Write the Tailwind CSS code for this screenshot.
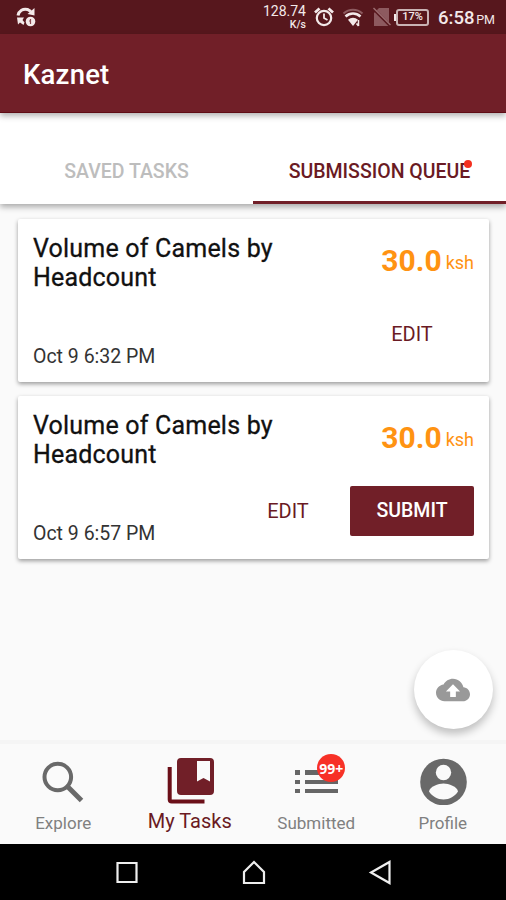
<!DOCTYPE html>
<html lang="en">
<head>
    <meta charset="UTF-8">
    <meta name="viewport" content="width=device-width, initial-scale=1.0">
    <title>Kaznet</title>
    <script src="https://cdn.jsdelivr.net/npm/@tailwindcss/browser@4"></script>
</head>
<body class="bg-[#fafafa]">
<div class="flex h-[900px] w-[506px] flex-col overflow-hidden bg-[#fafafa] font-[Roboto,sans-serif] whitespace-nowrap">

    <!-- Status bar -->
    <div class="flex h-[34px] shrink-0 items-center bg-[#57171d] pl-[15px] text-[#f3e9e9]">
        <svg class="h-[22px] w-[22px]" viewBox="0 0 22 22" fill="none">
            <path d="M3 9.500C4 4.500 8 2.500 12.500 3.500L16 5.500" stroke="#f3e9e9" stroke-width="3"/>
            <path d="M19.500 2V9.500L12.500 8Z" fill="#f3e9e9"/>
            <path d="M2 11.500H9L7.500 14L9.500 16.500L8.500 19L5 16.500L3 18.500Z" fill="#f3e9e9"/>
            <circle cx="15.500" cy="15.500" r="4.800" fill="#f3e9e9"/>
            <path d="M15.500 13V18M14 15H15.500" stroke="#8a4a50" stroke-width="1.200"/>
        </svg>
        <div class="ml-auto flex w-[44px] flex-col items-end">
            <span class="text-[14px] leading-[15px]">128.74</span>
            <span class="text-[10.5px] leading-[11px] font-medium">K/s</span>
        </div>
        <svg class="ml-[7px] h-[22px] w-[22px]" viewBox="0 0 22 22" fill="none" stroke="#f3e9e9">
            <circle cx="11" cy="12" r="7.200" stroke-width="2.200"/>
            <path d="M11 7.500V12L14.500 14" stroke-width="1.800"/>
            <path d="M2 6.500L6.500 2.500M20 6.500L15.500 2.500" stroke-width="2.800"/>
        </svg>
        <svg class="ml-[7px] h-[20px] w-[22px]" viewBox="0 0 22 20" fill="none">
            <path d="M1.500 6.500C7 1.500 15 1.500 20.500 6.500" stroke="#8d5a5f" stroke-width="2"/>
            <path d="M3.500 9.500C8 5.500 14 5.500 18.500 9.500" stroke="#f3e9e9" stroke-width="2.600"/>
            <path d="M6 12.700C9 10 13 10 16 12.700L11 19Z" fill="#f3e9e9"/>
            <path d="M16.500 13V19M14.500 16.500L16.500 19" stroke="#f3e9e9" stroke-width="1.500"/>
        </svg>
        <svg class="ml-[9px] h-[20px] w-[18px]" viewBox="0 0 18 20">
            <path d="M6 1H16V19H1V6Z" fill="#8d5a5f"/>
            <path d="M0 1.500L17.500 19" stroke="#57171d" stroke-width="3"/>
            <path d="M.5 1L17.500 18" stroke="#9c6e72" stroke-width="1.400"/>
        </svg>
        <div class="ml-[3px] flex items-center">
            <div class="h-[7px] w-[2px] bg-[#f3e9e9]"></div>
            <div class="flex h-[17px] w-[33px] items-center justify-center rounded-[3px] border-2 border-[#c9b3b4] text-[11px] font-medium">17%</div>
        </div>
        <div class="mt-[3px] mr-[11px] ml-[9px] flex w-[57px] items-baseline justify-between">
            <span class="text-[18.5px] leading-[20px] font-medium">6:58</span>
            <span class="text-[12.5px]">PM</span>
        </div>
    </div>

    <!-- App bar -->
    <header class="relative z-20 flex h-[79px] shrink-0 items-center border-b border-[#5f0c15] bg-[#711f28] pt-[4px] pl-[23px] shadow-[0_3px_6px_rgba(0,0,0,0.3)]">
        <h1 class="text-[27.5px] leading-none font-medium tracking-[0.2px] text-white">Kaznet</h1>
    </header>

    <!-- Tabs -->
    <nav class="relative z-10 flex h-[91px] shrink-0 bg-white text-[19.5px] shadow-[0_3px_6px_rgba(0,0,0,0.32)]">
        <div class="flex w-[253px] items-end justify-center pb-[20px] leading-[24px] font-medium text-[#bdbdbd]">SAVED TASKS</div>
        <div class="flex flex-1 items-end justify-center border-b-[3px] border-[#711f28] pb-[17px] leading-[24px] font-medium text-[#6a1a23]">
            <span class="relative">SUBMISSION QUEUE<i class="absolute top-0 -right-[2px] h-[8px] w-[8px] rounded-full bg-[#f4301f]"></i></span>
        </div>
    </nav>

    <!-- Task list -->
    <main class="flex flex-1 flex-col gap-[14px] pt-[15px] pr-[17px] pl-[18px]">
        <article class="flex h-[163px] justify-between rounded-[2px] bg-white pr-[15px] pl-[15px] shadow-[0_2px_4px_rgba(0,0,0,0.38)]">
            <div class="flex flex-col justify-between pt-[15px] pb-[13px]">
                <h2 class="text-[25px] leading-[29px] tracking-[0.2px] text-[#111] [-webkit-text-stroke:0.3px_#111]">Volume of Camels by<br>Headcount</h2>
                <time class="text-[19.5px] leading-[24px] text-[#333]">Oct 9 6:32 PM</time>
            </div>
            <div class="flex flex-col items-end justify-between pt-[24px] pb-[23px] text-[#ff9312]">
                <div class="flex items-baseline gap-[4px] leading-[36px]">
                    <span class="text-[30px] font-bold">30.0</span>
                    <span class="relative -top-[2px] text-[18px]">ksh</span>
                </div>
                <button class="h-[50px] w-[124px] text-[20px] text-[#6a1a23]">EDIT</button>
            </div>
        </article>
        <article class="flex h-[163px] justify-between rounded-[2px] bg-white pr-[15px] pl-[15px] shadow-[0_2px_4px_rgba(0,0,0,0.38)]">
            <div class="flex flex-col justify-between pt-[15px] pb-[13px]">
                <h2 class="text-[25px] leading-[29px] tracking-[0.2px] text-[#111] [-webkit-text-stroke:0.3px_#111]">Volume of Camels by<br>Headcount</h2>
                <time class="text-[19.5px] leading-[24px] text-[#333]">Oct 9 6:57 PM</time>
            </div>
            <div class="flex flex-col items-end justify-between pt-[24px] pb-[23px] text-[#ff9312]">
                <div class="flex items-baseline gap-[4px] leading-[36px]">
                    <span class="text-[30px] font-bold">30.0</span>
                    <span class="relative -top-[2px] text-[18px]">ksh</span>
                </div>
                <div class="-ml-[124px] flex">
                    <button class="h-[50px] w-[124px] text-[20px] text-[#6a1a23]">EDIT</button>
                    <button class="h-[50px] w-[124px] rounded-[2px] bg-[#711f28] text-[19.5px] font-medium text-white">SUBMIT</button>
                </div>
            </div>
        </article>
    </main>

    <!-- Upload button -->
    <button class="absolute top-[650px] left-[414px] z-10 flex h-[79px] w-[79px] items-center justify-center rounded-full bg-white shadow-[0_5px_9px_rgba(0,0,0,0.24)]">
        <svg class="-ml-[1px] h-[34px] w-[34px]" viewBox="0 0 24 24" fill="#999">
            <path d="M19.350 10.040C18.670 6.590 15.640 4 12 4 9.110 4 6.600 5.640 5.350 8.040 2.340 8.360 0 10.910 0 14c0 3.310 2.690 6 6 6h13c2.760 0 5-2.240 5-5 0-2.640-2.050-4.780-4.650-4.960zM14 13v4h-4v-4H7l5-5 5 5h-3z"/>
        </svg>
    </button>

    <!-- Bottom navigation -->
    <nav class="relative z-20 grid h-[104px] shrink-0 grid-cols-4 border-t-4 border-[#f5f5f5] bg-[#fafafa] text-[17px] text-[#808080]">
        <div class="flex flex-col items-center pt-[13px]">
            <svg class="h-[48px] w-[48px]" viewBox="0 0 48 48" fill="none" stroke="#696969">
                <circle cx="18.800" cy="20" r="13.300" stroke-width="4"/>
                <path d="M28.500 29.500L42.500 43.500" stroke-width="5"/>
            </svg>
            <span class="mt-[8px] leading-[20px]">Explore</span>
        </div>
        <div class="flex flex-col items-center pt-[13px] text-[#6a1a23]">
            <svg class="h-[48px] w-[48px]" viewBox="0 0 48 48">
                <path d="M3.700 10V42.500Q3.700 44.500 5.700 44.500H38.500" fill="none" stroke="#6b0f18" stroke-width="4"/>
                <path fill="#711f28" fill-rule="evenodd" d="M15 1H44Q48 1 48 5V34Q48 38 44 38H15Q11 38 11 34V5Q11 1 15 1ZM31 4V24.500L37.500 21L44 24.500V4Z"/>
            </svg>
            <span class="mt-[5px] text-[20px] leading-[22px]">My Tasks</span>
        </div>
        <div class="flex flex-col items-center pt-[13px]">
            <div class="relative h-[48px] w-[48px]">
                <svg class="h-[48px] w-[48px]" viewBox="0 0 48 48" fill="#666">
                    <path d="M3 13H8V18H3zM13 13H46V18H13zM3 23H8V27H3zM13 23H46V27H13zM3 32H8V36H3zM13 32H46V36H13z"/>
                </svg>
                <span class="absolute -top-[3px] left-[25px] flex h-[28px] w-[28px] items-center justify-center rounded-full bg-[#f73127] font-['Open_Sans',sans-serif] text-[14px] font-bold text-white">99+</span>
            </div>
            <span class="mt-[8px] leading-[20px]">Submitted</span>
        </div>
        <div class="flex flex-col items-center pt-[13px]">
            <svg class="h-[48px] w-[48px]" viewBox="0 0 48 48">
                <circle cx="24.500" cy="25" r="23.300" fill="#696969"/>
                <circle cx="24.500" cy="15.500" r="7.700" fill="#fafafa"/>
                <path d="M10 34.500C10.500 29.500 19.500 26.500 24.500 26.500S38.500 29.500 39 34.500C36 39 30.500 42.500 24.500 42.500S13 39 10 34.500Z" fill="#fafafa"/>
            </svg>
            <span class="mt-[8px] leading-[20px]">Profile</span>
        </div>
    </nav>

    <!-- Android system keys -->
    <div class="flex h-[56px] shrink-0 items-center justify-between bg-black pr-[112px] pl-[113px]">
        <svg class="h-[28px] w-[28px]" viewBox="0 0 28 28" fill="none" stroke="#eee" stroke-width="2.200">
            <path d="M4.500 5H23.500V24H4.500Z"/>
        </svg>
        <svg class="h-[28px] w-[28px]" viewBox="0 0 28 28" fill="none" stroke="#eee" stroke-width="2.200">
            <path d="M4 25V14L14 4L24 14V25Z"/>
        </svg>
        <svg class="h-[28px] w-[28px]" viewBox="0 0 28 28" fill="none" stroke="#eee" stroke-width="2.200">
            <path d="M23.500 4V25L5 14.500Z"/>
        </svg>
    </div>
</div>
</body>
</html>
